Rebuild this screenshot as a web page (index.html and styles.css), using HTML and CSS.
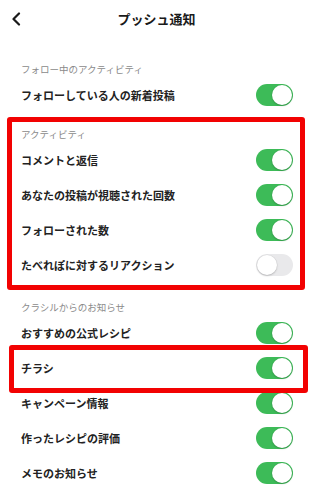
FILE: index.html
```html
<!DOCTYPE html>
<html lang="ja">
<head>
    <meta charset="UTF-8">
    <meta name="viewport" content="width=device-width, initial-scale=1.0">
    <title>プッシュ通知</title>
    <link rel="stylesheet" href="styles.css">
</head>
<body>

<div class="screen">
    <header class="nav">
        <span class="back">
            <svg width="10" height="14" viewBox="0 0 10 14"><path d="M8 1.5 L2.5 7 L8 12.5" fill="none" stroke="#1a1a1a" stroke-width="2.2" stroke-linecap="round" stroke-linejoin="round"/></svg>
        </span>
        <h1>プッシュ通知</h1>
        <span></span>
    </header>

    <section class="group first">
        <h2 class="group-title">フォロー中のアクティビティ</h2>
        <div class="row"><span class="label">フォローしている人の新着投稿</span><span class="switch on"><i></i></span></div>
    </section>

    <section class="group marked">
        <h2 class="group-title">アクティビティ</h2>
        <div class="row"><span class="label">コメントと返信</span><span class="switch on"><i></i></span></div>
        <div class="row"><span class="label">あなたの投稿が視聴された回数</span><span class="switch on"><i></i></span></div>
        <div class="row"><span class="label">フォローされた数</span><span class="switch on"><i></i></span></div>
        <div class="row"><span class="label">たべれぽに対するリアクション</span><span class="switch"><i></i></span></div>
    </section>

    <section class="group last">
        <h2 class="group-title">クラシルからのお知らせ</h2>
        <div class="row"><span class="label">おすすめの公式レシピ</span><span class="switch on"><i></i></span></div>
        <div class="row row-marked"><span class="label">チラシ</span><span class="switch on"><i></i></span></div>
        <div class="row"><span class="label">キャンペーン情報</span><span class="switch on"><i></i></span></div>
        <div class="row"><span class="label">作ったレシピの評価</span><span class="switch on"><i></i></span></div>
        <div class="row"><span class="label">メモのお知らせ</span><span class="switch on"><i></i></span></div>
    </section>
</div>

</body>
</html>
```

FILE: styles.css
```css
body {
    margin: 0;
    padding: 0;
    background-color: #ffffff;
    font-family: "Noto Sans CJK JP", "Noto Sans", sans-serif;
    color: #222222;
}
.screen {
    width: 316px;
    height: 497px;
    overflow: hidden;
}
.nav {
    height: 36px;
    display: grid;
    grid-template-columns: 1fr auto 1fr;
    align-items: center;
}
.nav .back {
    display: flex;
    padding-left: 11px;
    padding-top: 1px;
}
.nav h1 {
    margin: 0;
    font-size: 13px;
    font-weight: 700;
    color: #1a1a1a;
    padding-right: 3px;
}
.group {
    padding: 0 23px 0 21px;
    margin-top: 15px;
}
.group.first {
    margin-top: 26px;
}
.group.last {
    margin-top: 18px;
}
.group-title {
    margin: 0;
    height: 15px;
    line-height: 15px;
    font-size: 9.5px;
    font-weight: 400;
    color: #8a8a8a; /* light grey caption */
}
.row {
    height: 35px;
    display: flex;
    align-items: center;
    justify-content: space-between;
}
.label {
    font-size: 11px;
    font-weight: 700;
    color: #222222;
}
.switch {
    width: 37px;
    height: 22px;
    box-sizing: border-box;
    padding: 1px;
    border-radius: 11px;
    background-color: #e9e9eb;
    display: flex;
    justify-content: flex-start;
}
.switch.on {
    background-color: #3dbb58; /* iOS green */
    justify-content: flex-end;
}
.switch i {
    width: 20px;
    height: 20px;
    border-radius: 50%;
    background-color: #ffffff;
    box-shadow: 0 1px 2px rgba(0,0,0,0.18), 0 0 0 0.5px rgba(0,0,0,0.06);
}

/* red annotation boxes */
.marked,
.row-marked {
    position: relative;
}
.marked::after,
.row-marked::after {
    content: "";
    position: absolute;
    border: 5px solid #f20202;
    border-radius: 3px;
    pointer-events: none;
}
.marked::after {
    top: -10px;
    bottom: -8px;
    left: 7px;
    right: 11px;
}
.row-marked::after {
    top: -5px;
    bottom: -8px;
    left: -12px;
    right: -15px;
}
```
